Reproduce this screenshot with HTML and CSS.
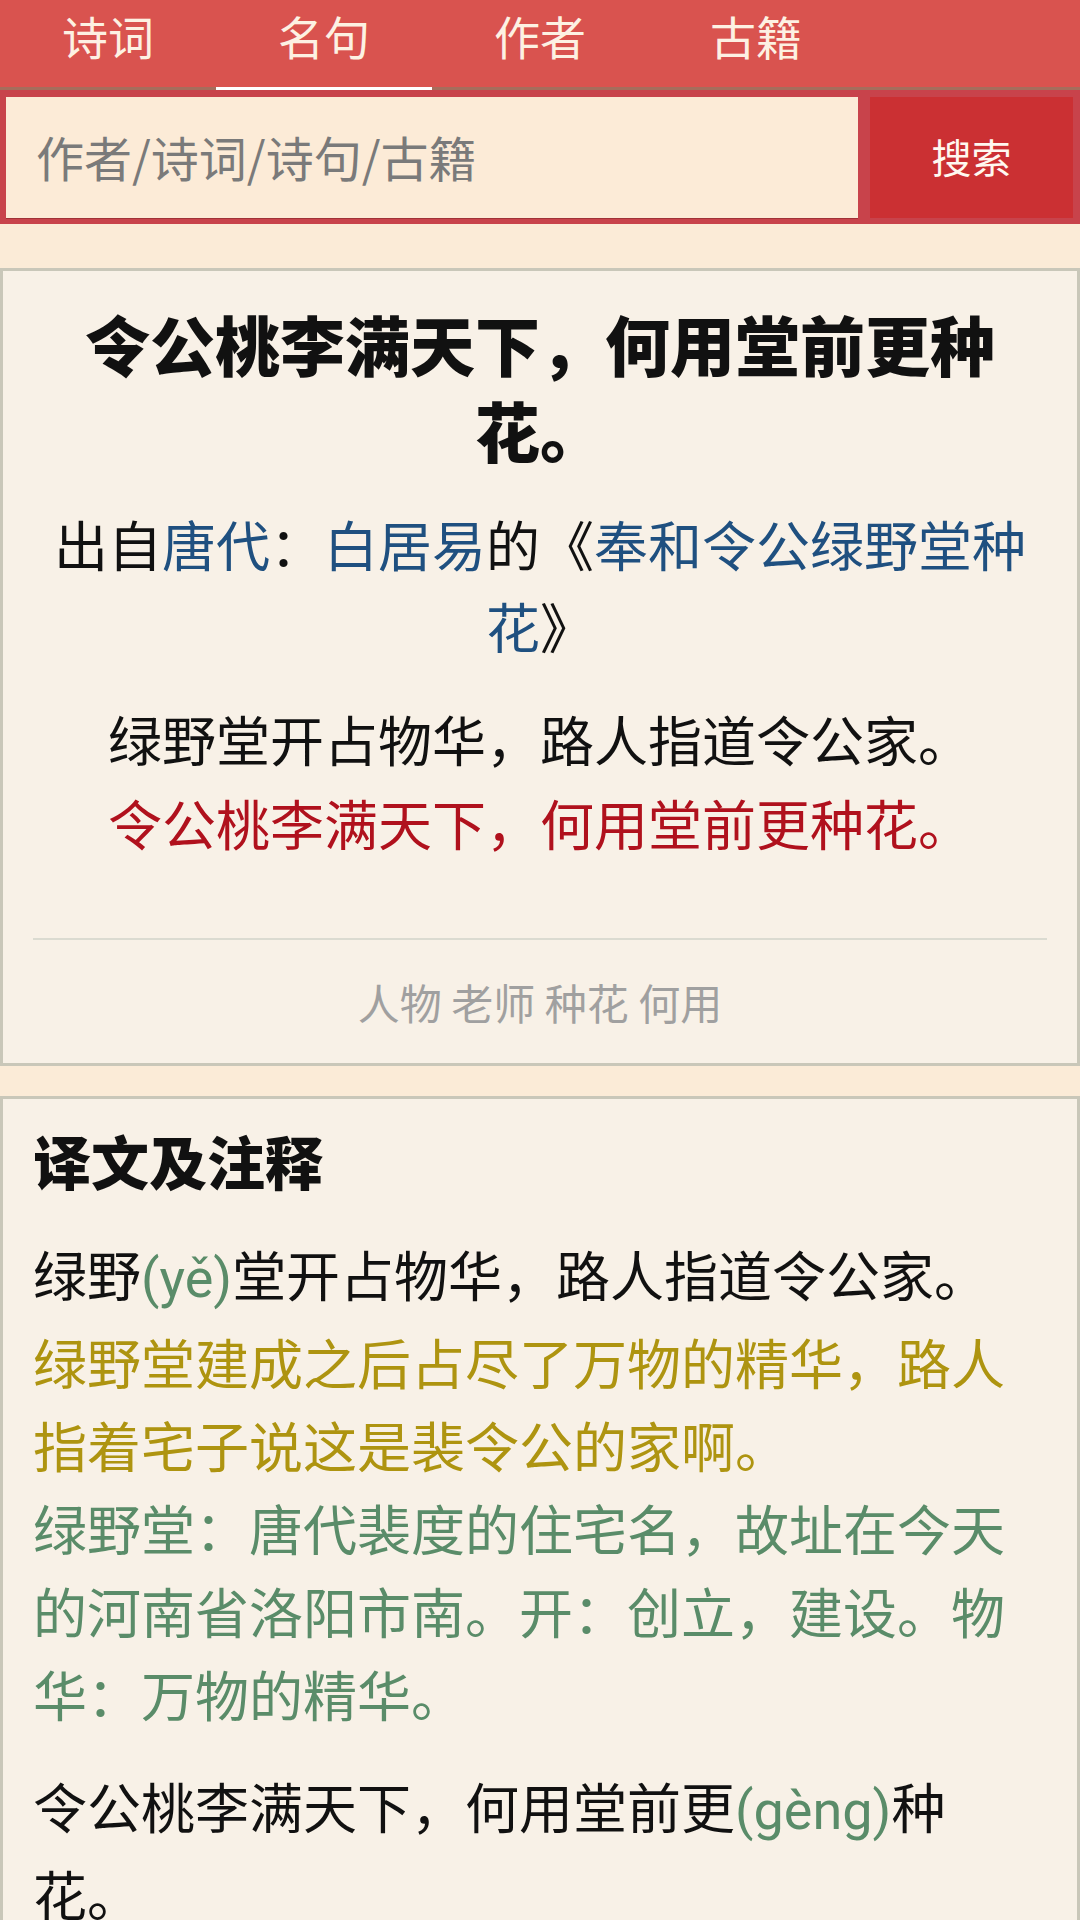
FILE: index.html
```html
<!DOCTYPE html>
<html lang="zh-CN">
<head>
<meta charset="utf-8">
<title>令公桃李满天下，何用堂前更种花。</title>
<link rel="stylesheet" href="styles.css">
</head>
<body>
<nav class="tabs">
  <a class="tab" href="#">诗词</a>
  <a class="tab active" href="#">名句</a>
  <a class="tab" href="#">作者</a>
  <a class="tab" href="#">古籍</a>
</nav>
<form class="search" onsubmit="return false">
  <input class="search-input" type="text" placeholder="作者/诗词/诗句/古籍">
  <button class="search-btn" type="submit">搜索</button>
</form>
<main class="content">
  <section class="card">
    <h1 class="title">令公桃李满天下，何用堂前更种花。</h1>
    <p class="source">出自<a href="#">唐代</a>：<a href="#">白居易</a>的《<a href="#">奉和令公绿野堂种花</a>》</p>
    <div class="poem">
      <p>绿野堂开占物华，路人指道令公家。</p>
      <p class="hl">令公桃李满天下，何用堂前更种花。</p>
    </div>
    <hr class="divider">
    <div class="tags"><a href="#">人物</a> <a href="#">老师</a> <a href="#">种花</a> <a href="#">何用</a></div>
  </section>
  <section class="card note">
    <h2 class="note-title">译文及注释</h2>
    <p class="para">
      <span class="line">绿野<span class="py">(yě)</span>堂开占物华，路人指道令公家。</span>
      <span class="line tr">绿野堂建成之后占尽了万物的精华，路人指着宅子说这是裴令公的家啊。</span>
      <span class="line zs">绿野堂：唐代裴度的住宅名，故址在今天的河南省洛阳市南。开：创立，建设。物华：万物的精华。</span>
    </p>
    <p class="para">
      <span class="line">令公桃李满天下，何用堂前更<span class="py">(gèng)</span>种花。</span>
      <span class="line tr">令公的学生遍布天下，又何须在堂前再种花呢。</span>
      <span class="line zs">桃李：比喻所栽培的后辈和所教的学生。</span>
    </p>
  </section>
</main>
</body>
</html>
```
FILE: styles.css
```css
* {
  box-sizing: border-box;
}

html, body {
  margin: 0;
  padding: 0;
}

body {
  background: #fbebd7;
  font-family: "Noto Sans CJK SC", "Noto Sans", sans-serif;
  color: #111;
  overflow: hidden;
}

a {
  text-decoration: none;
  color: inherit;
}

/* top tabs */
.tabs {
  display: flex;
  align-items: flex-start;
  height: 90px;
  background: #d9534f;
  border-bottom: 3px solid #a56d5c;
}

.tab {
  width: 216px;
  height: 90px;
  line-height: 71px;
  text-align: center;
  font-size: 46px;
  color: #fdf1e3;
}

.tab.active {
  box-shadow: inset 0 -3px 0 #ffffff;
}

/* search bar */
.search {
  display: flex;
  gap: 12px;
  margin: 0;
  padding: 7px 7px 6px 6px;
  background: #c8434b;
}

.search-input {
  flex: 1;
  min-width: 0;
  height: 121px;
  margin: 0;
  padding: 0 0 4px 30px;
  border: none;
  outline: none;
  background: #fcebd7;
  font-family: "Noto Sans CJK SC", "Noto Sans", sans-serif;
  font-size: 48px;
  color: #333;
  box-shadow: 0 1px 0 rgba(110, 30, 30, 0.45);
}

.search-input::placeholder {
  color: #7a7a7a;
}

.search-btn {
  width: 203px;
  height: 121px;
  margin: 0;
  padding: 0 0 4px;
  border: none;
  background: #cb3033;
  color: #fff8f0;
  font-family: "Noto Sans CJK SC", "Noto Sans", sans-serif;
  font-size: 40px;
}

/* content */
.content {
  display: flex;
  flex-direction: column;
  gap: 30px;
  padding-top: 44px;
}

.card {
  background: #f8f1e7;
  border: 3px solid #c9c7b9;
  padding: 0 30px;
}

.title {
  margin: 29px 0 0;
  font-size: 65px;
  line-height: 86px;
  font-weight: 900;
  text-align: center;
  color: #111;
}

.source {
  margin: 31px 0 0;
  font-size: 54px;
  line-height: 82px;
  text-align: center;
  color: #111;
}

.source a {
  color: #1f5080;
}

.poem {
  margin-top: 30px;
  font-size: 54px;
  line-height: 84px;
  text-align: center;
}

.poem p {
  margin: 0;
}

.hl {
  color: #b0111d;
}

.divider {
  margin: 73px 0 0;
  height: 2px;
  border: none;
  background: #dbdbd1;
}

.tags {
  padding: 35px 0;
  font-size: 42px;
  line-height: 53px;
  text-align: center;
  color: #a0a0a0;
}

/* notes card */
.note-title {
  margin: 21px 0 0;
  font-size: 58px;
  line-height: 80px;
  font-weight: 900;
  color: #111;
}

.para {
  margin: 32px 0 0;
  padding-right: 6px;
  font-size: 54px;
  line-height: 83px;
}

.para + .para {
  margin-top: 29px;
}

.line {
  display: block;
}

.py {
  font-family: "Roboto", "Noto Sans", sans-serif;
  color: #5a8c69;
}

.tr {
  color: #ae9410;
}

.zs {
  color: #5a8c69;
}
```
